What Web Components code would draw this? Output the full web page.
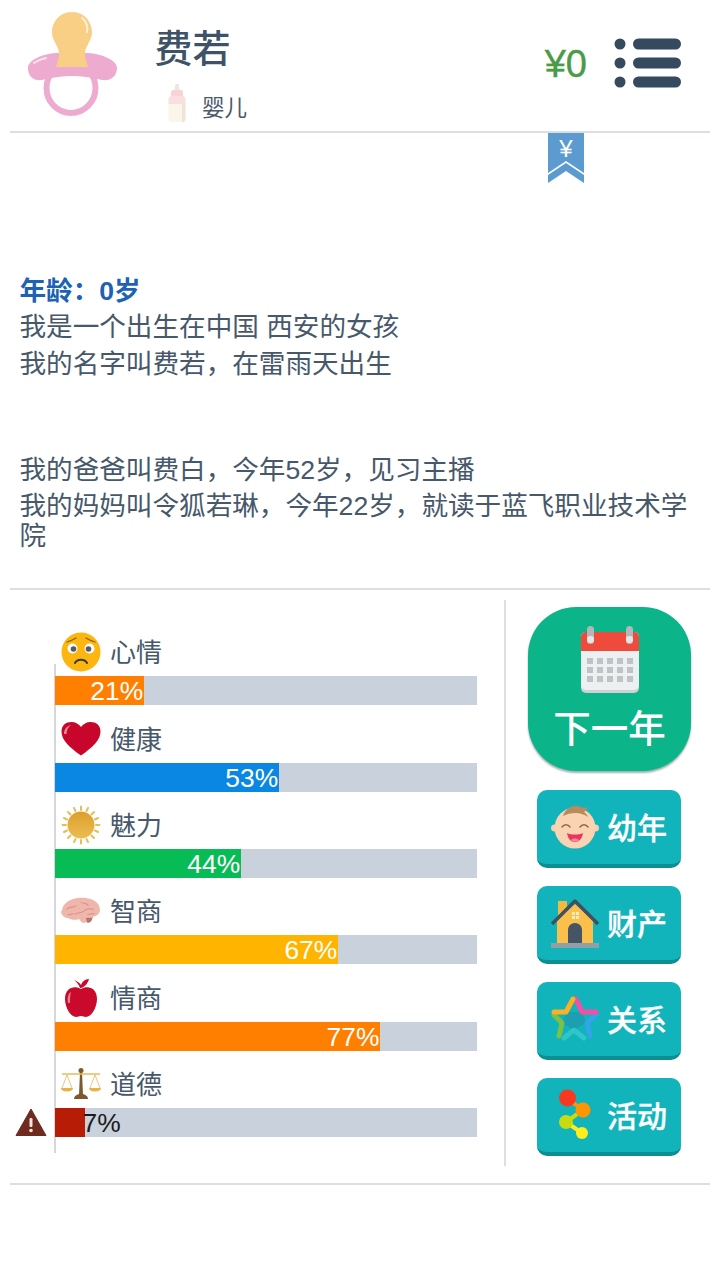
<!DOCTYPE html>
<html lang="zh">
<head>
<meta charset="utf-8">
<title>人生模拟器</title>
<style>
  html, body { margin: 0; background: #fff; }
  body { font-family: "Liberation Sans", "Noto Sans CJK SC", sans-serif; color: #34495e; }
</style>
</head>
<body>
<life-page>
  <life-header name="费若" stage="婴儿" money="¥0"></life-header>
  <life-story>
    <p class="age" slot="age">年龄：0岁</p>
    <story-line>我是一个出生在中国 西安的女孩</story-line>
    <story-line>我的名字叫费若，在雷雨天出生</story-line>
    <story-line gap>我的爸爸叫费白，今年52岁，见习主播</story-line>
    <story-line>我的妈妈叫令狐若琳，今年22岁，就读于蓝飞职业技术学院</story-line>
  </life-story>
  <life-status>
    <stat-bar slot="stats" label="心情" value="21" color="#ff8000" icon="mood"></stat-bar>
    <stat-bar slot="stats" label="健康" value="53" color="#0a87e3" icon="heart"></stat-bar>
    <stat-bar slot="stats" label="魅力" value="44" color="#07bb55" icon="sun"></stat-bar>
    <stat-bar slot="stats" label="智商" value="67" color="#ffb400" icon="brain"></stat-bar>
    <stat-bar slot="stats" label="情商" value="77" color="#ff8000" icon="apple"></stat-bar>
    <stat-bar slot="stats" label="道德" value="7" color="#b71c06" icon="scale" warn></stat-bar>
    <next-year slot="actions">下一年</next-year>
    <action-button slot="actions" icon="baby">幼年</action-button>
    <action-button slot="actions" icon="house">财产</action-button>
    <action-button slot="actions" icon="star">关系</action-button>
    <action-button slot="actions" icon="dots">活动</action-button>
  </life-status>
</life-page>

<script>
/**
 * Inline icons, all drawn in their own little viewBox.
 */
const ICONS = {
  pacifier: `<svg viewBox="0 0 100 110" width="100" height="110">
    <ellipse cx="51" cy="78" rx="24.500" ry="25" fill="none" stroke="#edabd0" stroke-width="6"/>
    <path d="M8 58C8 50 22 44 36 43H68C82 44 97 50 97 58C97 67 90 71 82 70C70 67 60 66 52 66C44 66 34 67 22 70C14 71 8 67 8 58z" fill="#edabd0"/>
    <path d="M14 53c3-2 7-4 12-5" stroke="#fbe3ef" stroke-width="2" stroke-linecap="round" fill="none"/>
    <path d="M52 2C66 2 72 14 72 22C72 32 64 36 65 46L68 57H36L39 46C40 36 32 32 32 22C32 14 38 2 52 2z" fill="#f8cf85"/>
    <path d="M62 8c4 3 6 8 5 14" stroke="#fdf0d4" stroke-width="2" stroke-linecap="round" fill="none"/>
  </svg>`,
  bottle: `<svg viewBox="0 0 20 40" width="20" height="40">
    <path d="M8.500 1h3l1 6h-5z" fill="#eee6dc"/>
    <rect x="4" y="7" width="12" height="8" rx="2.500" fill="#f8d3d6"/>
    <path d="M1.500 17c0-3 1-4 3-4h11c2 0 3 1 3 4v19c0 2-1 3-3 3h-11c-2 0-3-1-3-3z" fill="#fbf6ea"/>
    <path d="M1.500 21h17v-4c0-3-1-4-3-4h-11c-2 0-3 1-3 4z" fill="#fadfe0"/>
    <path d="M15 21h3.500v15c0 2-1 3-3.500 3z" fill="#ece5d8"/>
  </svg>`,
  menu: `<svg viewBox="0 0 68 52" width="68" height="52" fill="#35495f">
    <circle cx="6" cy="6" r="5.500"/><circle cx="6" cy="25" r="5.500"/><circle cx="6" cy="44" r="5.500"/>
    <rect x="19" y="0.500" width="48" height="11" rx="5.500"/>
    <rect x="19" y="19.500" width="48" height="11" rx="5.500"/>
    <rect x="19" y="38.500" width="48" height="11" rx="5.500"/>
  </svg>`,
  mood: `<svg viewBox="0 0 40 40" width="40" height="40">
    <circle cx="20" cy="20" r="19.500" fill="#fdb50f"/>
    <circle cx="11.500" cy="16.500" r="5" fill="#fff"/><circle cx="28.500" cy="16.500" r="5" fill="#fff"/>
    <circle cx="12.500" cy="17" r="2.800" fill="#55596a"/><circle cx="27.500" cy="17" r="2.800" fill="#55596a"/>
    <path d="M6 10c3-1 6-2 9-4M34 10c-3-1-6-2-9-4" stroke="#8a6512" stroke-width="1.300" fill="none" stroke-linecap="round"/>
    <path d="M14 31c2-4.500 10-4.500 12 0" stroke="#3c3a34" stroke-width="2" fill="none" stroke-linecap="round"/>
  </svg>`,
  heart: `<svg viewBox="0 0 40 40" width="40" height="40">
    <path d="M20 36.500C8 28 .5 21 .5 12.500.5 6 5 3 10.500 3c4 0 7.500 2 9.500 5 2-3 5.500-5 9.500-5C35 3 39.500 6 39.500 12.500 39.500 21 32 28 20 36.500z" fill="#c8062c"/>
    <path d="M3 15c0-5 3-8 7-9-3 2-4.500 5-4.500 9z" fill="#f58a9d"/>
  </svg>`,
  sun: `<svg viewBox="0 0 40 40" width="40" height="40">
    <g stroke="#e8bd58" stroke-width="2" stroke-linecap="round">
      <path d="M20 1.500v3.500M20 35v3.500M1.500 20h3.500M35 20h3.500M7 7l2.500 2.500M30.500 30.500L33 33M33 7l-2.500 2.500M9.500 30.500L7 33M13 3l1.500 3M25.500 34l1.500 3M27 3l-1.500 3M14.500 34L13 37M3 13l3 1.500M34 25.500l3 1.500M37 13l-3 1.500M6 25.500L3 27"/>
    </g>
    <defs><linearGradient id="s" x1="0" y1="0" x2="0" y2="1"><stop offset="0" stop-color="#dc9f2c"/><stop offset="1" stop-color="#ecbd52"/></linearGradient></defs>
    <circle cx="20" cy="20" r="13.500" fill="url(#s)"/>
  </svg>`,
  brain: `<svg viewBox="0 0 40 32" width="40" height="28" preserveAspectRatio="none">
    <path d="M1 16C1 8 8 2 17 1c8-1 18 1 21 9 2 5 1 10-4 12-3 1-5 1-7 2l-1 4c-1 2-5 2-6 0l-2-3c-4 2-8 1-11-1-3 0-7-3-7-8z" fill="#efb6ac"/>
    <path d="M6 14c3-4 6-1 9-4M14 20c3-3 6-1 9-4s6-3 9-2M20 6c2 2 5 1 7 3M7 20c2 1 3 0 5-1M27 20c2 0 4-1 6-1" stroke="#d88f88" stroke-width="1.200" fill="none" stroke-linecap="round"/>
    <path d="M25 24l1 5c1 1 3 0 4-1l2-5z" fill="#b9736a"/>
  </svg>`,
  apple: `<svg viewBox="0 0 40 40" width="40" height="40">
    <path d="M20 11C14 7 4 9 4 21c0 9 6 18 11 18 2 0 3-1 5-1s3 1 5 1c5 0 11-9 11-18 0-12-10-14-16-10z" fill="#c90a2c"/>
    <path d="M19 10c-1-3-3-6-6-8 3 1 6 3 7 5 1-3 4-6 8-6-1 4-4 8-8 9z" fill="#c90a2c"/>
    <path d="M7 25c-1-5 0-9 3-11-1 4-1 7-1 11z" fill="#ee7f90"/>
  </svg>`,
  scale: `<svg viewBox="0 0 40 32" width="40" height="32">
    <path d="M19 4h2l1 23h-4z" fill="#7d5a2e"/>
    <circle cx="20" cy="2.500" r="2.500" fill="#7d5a2e"/>
    <path d="M13 31c0-3 3-5 7-5s7 2 7 5z" fill="#7d5a2e"/>
    <path d="M1 6h38" stroke="#e8b858" stroke-width="1.500"/>
    <path d="M6 7L1 20M6 7l5 13M34 7l-5 13M34 7l5 13" stroke="#e3ae45" stroke-width=".7" fill="none"/>
    <path d="M0 20h12c0 2-2 3.500-6 3.500S0 22 0 20zM28 20h12c0 2-2 3.500-6 3.500S28 22 28 20z" fill="#e9b245"/>
  </svg>`,
  warning: `<svg viewBox="0 0 32 28" width="32" height="28">
    <path d="M16 1L31 27.500H1z" fill="#6e2b1e" stroke="#6e2b1e" stroke-linejoin="round"/>
    <rect x="14.500" y="10" width="3" height="9" rx="1.200" fill="#f3e6e0"/>
    <circle cx="16" cy="22.500" r="1.800" fill="#f3e6e0"/>
  </svg>`,
  calendar: `<svg viewBox="0 0 58 70" width="58" height="70">
    <rect x="0" y="7" width="58" height="61" rx="5" fill="#cfd2d4"/>
    <rect x="0" y="7" width="58" height="58" rx="5" fill="#edf0f1"/>
    <path d="M0 26V12c0-3 2-5 5-5h48c3 0 5 2 5 5v14z" fill="#ee4b3c"/>
    <rect x="6" y="1" width="7" height="18" rx="3.500" fill="#b4b7b8"/>
    <rect x="45" y="1" width="7" height="18" rx="3.500" fill="#b4b7b8"/>
    <rect x="6" y="11" width="7" height="7" rx="3" fill="#e3e5e6"/>
    <rect x="45" y="11" width="7" height="7" rx="3" fill="#e3e5e6"/>
    <g fill="#c0c3c5">
      <path d="M6 33h6v6H6zM16 33h6v6h-6zM26 33h6v6h-6zM36 33h6v6h-6zM46 33h6v6h-6z"/>
      <path d="M6 42h6v6H6zM16 42h6v6h-6zM26 42h6v6h-6zM36 42h6v6h-6zM46 42h6v6h-6z"/>
      <path d="M6 51h6v6H6zM16 51h6v6h-6zM26 51h6v6h-6zM36 51h6v6h-6zM46 51h6v6h-6z"/>
    </g>
  </svg>`,
  baby: `<svg viewBox="0 0 48 44" width="48" height="44">
    <circle cx="3.500" cy="23" r="3.500" fill="#f7cfaa"/><circle cx="44.500" cy="23" r="3.500" fill="#f7cfaa"/>
    <circle cx="24" cy="23" r="20.500" fill="#fad4b2"/>
    <path d="M12 11c2-7 9-11 15-10 3 1 6 3 10 1-1 2-2 4-4 5 2 1 3 3 4 5-5-3-8-4-12-4-5 0-9 1-13 3z" fill="#b98a5c"/>
    <path d="M11 22c2-3 6-3 8 0M29 22c2-3 6-3 8 0" stroke="#8a6a50" stroke-width="1.500" fill="none" stroke-linecap="round"/>
    <path d="M16 28c4 2 12 2 16 0-1 6-4 9-8 9s-7-3-8-9z" fill="#e8365c"/>
    <path d="M20 35c2-2 6-2 8 0-2 2-6 2-8 0z" fill="#f78ba0"/>
  </svg>`,
  house: `<svg viewBox="0 0 50 50" width="50" height="50">
    <rect x="8" y="3" width="9" height="16" fill="#f6b93f"/>
    <path d="M25 6l18 16v23H7V22z" fill="#fbc04c"/>
    <path d="M2 26L25 3l23 23" fill="none" stroke="#3f5062" stroke-width="3.500" stroke-linejoin="round"/>
    <path d="M18 45V32c0-4 3-7 7-7s7 3 7 7v13z" fill="#465566"/>
    <rect x="1" y="45" width="48" height="5" fill="#8fa0a6"/>
    <path d="M22 14h3v3h-3zM26 14h3v3h-3zM22 18h3v3h-3zM26 18h3v3h-3z" fill="#fdeac0"/>
  </svg>`,
  star: `<svg viewBox="0 0 48 46" width="48" height="46">
    <path d="M16 16h15l4 11-12 7-12-7z" fill="#1c9fb0"/>
    <g fill="none" stroke-width="5" stroke-linecap="round" stroke-linejoin="round">
      <path d="M13 42l10-8 10 8" stroke="#2ec6c9"/>
      <path d="M3 19l8 8-3 13" stroke="#7cc143"/>
      <path d="M45 19L36 27l3 13" stroke="#33a4ea"/>
      <path d="M25 3l6 13h14" stroke="#f24fa6"/>
      <path d="M3 16h12l7-13" stroke="#fbb025"/>
    </g>
  </svg>`,
  dots: `<svg viewBox="0 0 34 52" width="34" height="52">
    <path d="M10 10L25 21" stroke="#ff9500" stroke-width="4" fill="none"/>
    <path d="M25 21L8 33" stroke="#c8db12" stroke-width="4" fill="none"/>
    <path d="M8 33l16 11" stroke="#ffee1c" stroke-width="4" fill="none"/>
    <circle cx="9.500" cy="9" r="8.500" fill="#f73a1f"/>
    <circle cx="25" cy="21" r="7.500" fill="#ff9500"/>
    <circle cx="8" cy="33" r="7" fill="#c8db12"/>
    <circle cx="24" cy="44" r="6" fill="#ffee1c"/>
  </svg>`
}

/**
 * Page frame, keeps the 10px side margin.
 */
customElements.define('life-page',
  class extends HTMLElement {
    constructor () {
      super()
      this.attachShadow({ mode: 'open' }).innerHTML = `
<style>
  :host { display: block; padding: 0 10px; min-height: 1280px; box-sizing: border-box; position: relative; }
</style>
<slot></slot>`
    }
  }
)

/**
 * Top bar with avatar, name, stage, money and menu.
 */
customElements.define('life-header',
  class extends HTMLElement {
    connectedCallback () {
      if (this.shadowRoot) return
      this.attachShadow({ mode: 'open' }).innerHTML = `
<style>
  :host { display: flex; align-items: flex-start; height: 133px; box-sizing: border-box; border-bottom: 2px solid #dcdfe1; position: relative; }
  .avatar { width: 100px; height: 110px; margin: 10px 0 0 10px; flex: none; }
  .who { margin-left: 34.500px; flex: 1; }
  .name { font-size: 38px; line-height: 48px; margin-top: 25px; font-weight: 500; color: #3f5368; }
  .stage { display: flex; align-items: center; margin: 10px 0 0 12px; font-size: 22.500px; color: #4a5a6b; line-height: 38px; }
  .stage span { margin-left: 15.500px; position: relative; top: 6px; }
  .bottle { height: 40px; }
  .money { font-size: 38px; line-height: 44px; color: #4a9b46; margin: 42px 0 0 0; -webkit-text-stroke: .4px #4a9b46; }
  .menu { margin: 38px 28px 0 27px; height: 52px; }
  .bookmark { position: absolute; left: 538px; top: 132px; width: 36px; height: 52px; }
  .bookmark b { position: absolute; left: 0; right: 0; top: 2px; text-align: center; color: #fff; font-weight: 400; font-size: 24px; line-height: 30px; }
</style>
<div class="avatar">${ICONS.pacifier}</div>
<div class="who">
  <div class="name">${this.getAttribute('name')}</div>
  <div class="stage"><div class="bottle">${ICONS.bottle}</div><span>${this.getAttribute('stage')}</span></div>
</div>
<div class="money">${this.getAttribute('money')}</div>
<div class="menu">${ICONS.menu}</div>
<div class="bookmark">
  <svg viewBox="0 0 36 52" width="36" height="52">
    <path d="M0 1h36v40L18 29 0 41z" fill="#5b9bd0"/>
    <path d="M0 43L18 31l18 12v8L18 39 0 51z" fill="#5b9bd0"/>
  </svg>
  <b>¥</b>
</div>`
    }
  }
)

/**
 * The text block with what happened this year.
 */
customElements.define('life-story',
  class extends HTMLElement {
    constructor () {
      super()
      this.attachShadow({ mode: 'open' }).innerHTML = `
<style>
  :host { display: block; padding: 143px 10px 22px 9.500px; height: 457px; box-sizing: border-box; border-bottom: 2px solid #dcdfe1; font-size: 26.600px; line-height: 30px; color: #46586a; }
  ::slotted(p) { margin: 0 0 6px; color: #1d62b5; font-weight: 700; }
</style>
<slot name="age"></slot>
<slot></slot>`
    }
  }
)

customElements.define('story-line',
  class extends HTMLElement {
    constructor () {
      super()
      this.attachShadow({ mode: 'open' }).innerHTML = `
<style>
  :host { display: block; margin-bottom: 6.500px; }
  :host([gap]) { margin-top: 76px; }
</style>
<slot></slot>`
    }
  }
)

/**
 * The two columns: stats on the left, actions on the right.
 */
customElements.define('life-status',
  class extends HTMLElement {
    constructor () {
      super()
      this.attachShadow({ mode: 'open' }).innerHTML = `
<style>
  :host { display: flex; height: 595px; box-sizing: border-box; border-bottom: 2px solid #dcdfe1; padding-top: 10px; }
  .stats { width: 494px; height: 566px; box-sizing: border-box; padding: 32.200px 0 0 45px; display: flex; flex-direction: column; position: relative; flex: none; }
  .stats::before { content: ""; position: absolute; left: 44px; top: 64px; bottom: 13px; width: 2px; background: #d5d7da; }
  .actions { height: 566px; box-sizing: border-box; flex: 1; border-left: 2px solid #dcdfe1; padding: 7px 0 0 22px; display: flex; flex-direction: column; align-items: flex-start; }
</style>
<div class="stats"><slot name="stats"></slot></div>
<div class="actions"><slot name="actions"></slot></div>`
    }
  }
)

/**
 * One stat: icon, label and a progress bar.
 */
customElements.define('stat-bar',
  class extends HTMLElement {
    connectedCallback () {
      if (this.shadowRoot) return
      const value = Number(this.getAttribute('value'))
      const warn = this.hasAttribute('warn')
      this.attachShadow({ mode: 'open' }).innerHTML = `
<style>
  :host { display: block; height: 86.400px; flex: none; width: 422px; position: relative; }
  .head { display: flex; align-items: flex-start; height: 44px; padding-left: 6px; }
  .icon { width: 40px; height: 40px; display: flex; align-items: center; justify-content: center; flex: none; }
  .label { margin-left: 9px; font-size: 26px; line-height: 42px; color: #46586a; }
  .track { height: 29px; background: #c9d2dc; display: flex; font-size: 26.400px; line-height: 30px; }
  .fill { width: ${value}%; box-sizing: border-box; padding-right: 0.500px; text-align: right; color: #fff; flex: none; }
  .outside { color: #1b1b1b; margin-left: -2px; }
  .warn { position: absolute; left: -40px; top: 44px; }
</style>
<div class="head"><div class="icon">${ICONS[this.getAttribute('icon')]}</div><div class="label">${this.getAttribute('label')}</div></div>
<div class="track">
  <div class="fill" style="background:${this.getAttribute('color')}">${warn ? '' : value + '%'}</div>
  ${warn ? `<div class="outside">${value}%</div>` : ''}
</div>
${warn ? `<div class="warn">${ICONS.warning}</div>` : ''}`
    }
  }
)

/**
 * The big green button.
 */
customElements.define('next-year',
  class extends HTMLElement {
    connectedCallback () {
      if (this.shadowRoot) return
      this.attachShadow({ mode: 'open' }).innerHTML = `
<style>
  :host { display: flex; flex-direction: column; align-items: center; width: 163px; height: 164px; box-sizing: border-box; padding-top: 18px; background: #0cb48a; border-radius: 48px; box-shadow: 0 2px 2px #9fb3ae; margin-bottom: 19px; color: #fff; font-size: 37.500px; font-weight: 500; line-height: 50px; flex: none; }
  svg { display: block; }
  .text { margin-top: 9px; }
</style>
${ICONS.calendar}
<div class="text"><slot></slot></div>`
    }
  }
)

/**
 * Smaller teal button with an icon.
 */
customElements.define('action-button',
  class extends HTMLElement {
    connectedCallback () {
      if (this.shadowRoot) return
      this.attachShadow({ mode: 'open' }).innerHTML = `
<style>
  :host { display: flex; align-items: center; width: 144px; height: 78px; box-sizing: border-box; margin: 0 0 18px 9px; background: #12b4bb; border-bottom: 4px solid #0b8f92; border-radius: 10px; color: #fff; font-size: 30px; font-weight: 500; line-height: 40px; flex: none; -webkit-text-stroke: .3px #fff; }
  .icon { width: 71px; display: flex; justify-content: center; padding-left: 4px; box-sizing: border-box; }
  .text { position: relative; top: 2px; left: -1px; }
  svg { display: block; }
</style>
<div class="icon">${ICONS[this.getAttribute('icon')]}</div>
<div class="text"><slot></slot></div>`
    }
  }
)
</script>
</body>
</html>
